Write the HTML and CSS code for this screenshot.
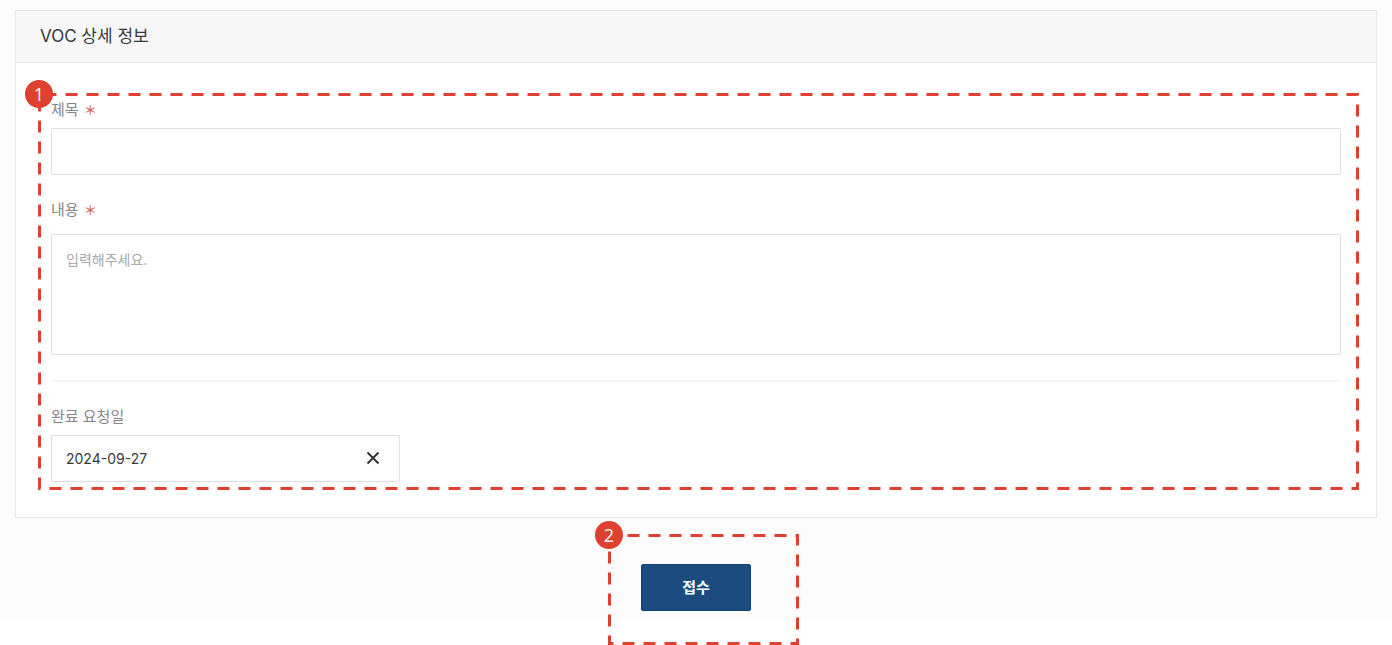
FILE: index.html
```html
<!DOCTYPE html>
<html lang="ko">
<head>
<meta charset="utf-8">
<meta name="viewport" content="width=device-width, initial-scale=1">
<title>VOC 상세 정보</title>
<link rel="stylesheet" href="styles.css">
</head>
<body>
<form class="page">
  <section class="card">
    <h1 class="card-header">VOC 상세 정보</h1>
    <div class="card-body">
      <div class="field">
        <label class="label" for="title">제목 <span class="required">＊</span></label>
        <input class="control" id="title" type="text" required>
      </div>
      <div class="field field-content">
        <label class="label" for="content">내용 <span class="required">＊</span></label>
        <textarea class="control control-area" id="content" placeholder="입력해주세요." required></textarea>
      </div>
      <hr class="divider">
      <div class="field">
        <label class="label" for="due">완료 요청일</label>
        <div class="date">
          <input class="date-input" id="due" type="text" value="2024-09-27">
          <button class="clear" type="button" aria-label="날짜 지우기">
            <svg width="14" height="14" viewBox="0 0 14 14" fill="none" stroke="currentColor" stroke-width="1.8"><path d="M1.5 1.5 12.5 12.5M12.5 1.5 1.5 12.5"/></svg>
          </button>
        </div>
      </div>
      <div class="callout callout-form">
        <svg class="outline"><rect class="dash dash-form" x="1.5" y="1.5"/></svg>
        <span class="badge">1</span>
      </div>
    </div>
  </section>
  <div class="actions">
    <div class="submit-wrap">
      <button class="submit" type="button">접수</button>
      <div class="callout callout-submit">
        <svg class="outline"><rect class="dash dash-submit" x="1.5" y="1.5"/></svg>
        <span class="badge">2</span>
      </div>
    </div>
  </div>
</form>
</body>
</html>
```

FILE: styles.css
```css
* {
  box-sizing: border-box;
}

body {
  margin: 0;
  padding-bottom: 25px;
  background: #fff;
  color: #343a40;
  font-family: Inter, "Noto Sans CJK KR", sans-serif;
}

button,
input,
textarea {
  font-family: inherit;
}

.page {
  padding: 10px 15px 9px;
  background: #fcfcfc;
}

.card {
  border: 1px solid #e6eaed;
  border-radius: 2px;
  background: #fff;
}

.card-header {
  margin: 0;
  padding: 12px 24px 13px;
  border-bottom: 1px solid #e6eaed;
  background: #f7f7f7;
  font-size: 17px;
  font-weight: 400;
  line-height: 26px;
}

.card-body {
  position: relative;
  padding: 36px 35px 35px;
}

.field {
  display: flex;
  flex-direction: column;
  gap: 8px;
}

.field-content {
  margin-top: 24px;
  gap: 14px;
}

.label {
  color: #868686;
  font-size: 15px;
  line-height: 21px;
}

.required {
  margin-left: 1px;
  color: #d9635b;
  font-size: 13px;
  font-weight: 500;
  line-height: 1;
}

.control {
  display: block;
  width: 100%;
  height: 47px;
  margin: 0;
  padding: 14px;
  border: 1px solid #dcdfe5;
  border-radius: 2px;
  background: #fff;
  color: inherit;
  font-size: 14px;
  line-height: 21px;
  outline: none;
  resize: none;
}

.control-area {
  height: 121px;
}

.control::placeholder {
  color: #a9a9a9;
}

.divider {
  width: 100%;
  height: 2px;
  margin: 25px 0 24px;
  border: 0;
  background: #f5f5f5;
}

.date {
  display: flex;
  align-items: center;
  width: 349px;
  max-width: 100%;
  height: 47px;
  padding: 0 19px 1px 14px;
  border: 1px solid #dcdfe5;
  border-radius: 2px;
  background: #fff;
}

.date-input {
  flex: 1;
  min-width: 0;
  padding: 0;
  border: 0;
  background: none;
  color: inherit;
  font-size: 14px;
  outline: none;
}

.clear {
  display: flex;
  padding: 0;
  border: 0;
  background: none;
  color: #2b2f33;
}

.actions {
  display: flex;
  justify-content: center;
  padding-top: 46px;
}

.submit-wrap {
  position: relative;
}

.submit {
  display: block;
  width: 110px;
  height: 47px;
  padding: 0 0 2px;
  border: 1px solid #164275;
  border-radius: 2px;
  background: #1c4b80;
  color: #fff;
  font-size: 15px;
  font-weight: 700;
}

.callout {
  position: absolute;
  pointer-events: none;
}

.callout-form {
  inset: 30px 17px 27px 22px;
}

.callout-submit {
  inset: -30px -48px -34px -33px;
}

.outline {
  display: block;
  width: 100%;
  height: 100%;
}

.dash {
  width: calc(100% - 3px);
  height: calc(100% - 3px);
  fill: none;
  stroke: #de412f;
  stroke-width: 3px;
  stroke-dasharray: 12 9;
}

.dash-form {
  stroke-dashoffset: -5px;
}

.dash-submit {
  stroke-dashoffset: 3px;
}

.badge {
  position: absolute;
  top: -13px;
  left: -13px;
  width: 28px;
  height: 28px;
  border-radius: 50%;
  background: #de412f;
  color: #fff;
  font-family: "Open Sans", sans-serif;
  font-size: 18px;
  line-height: 28px;
  text-align: center;
}
```
